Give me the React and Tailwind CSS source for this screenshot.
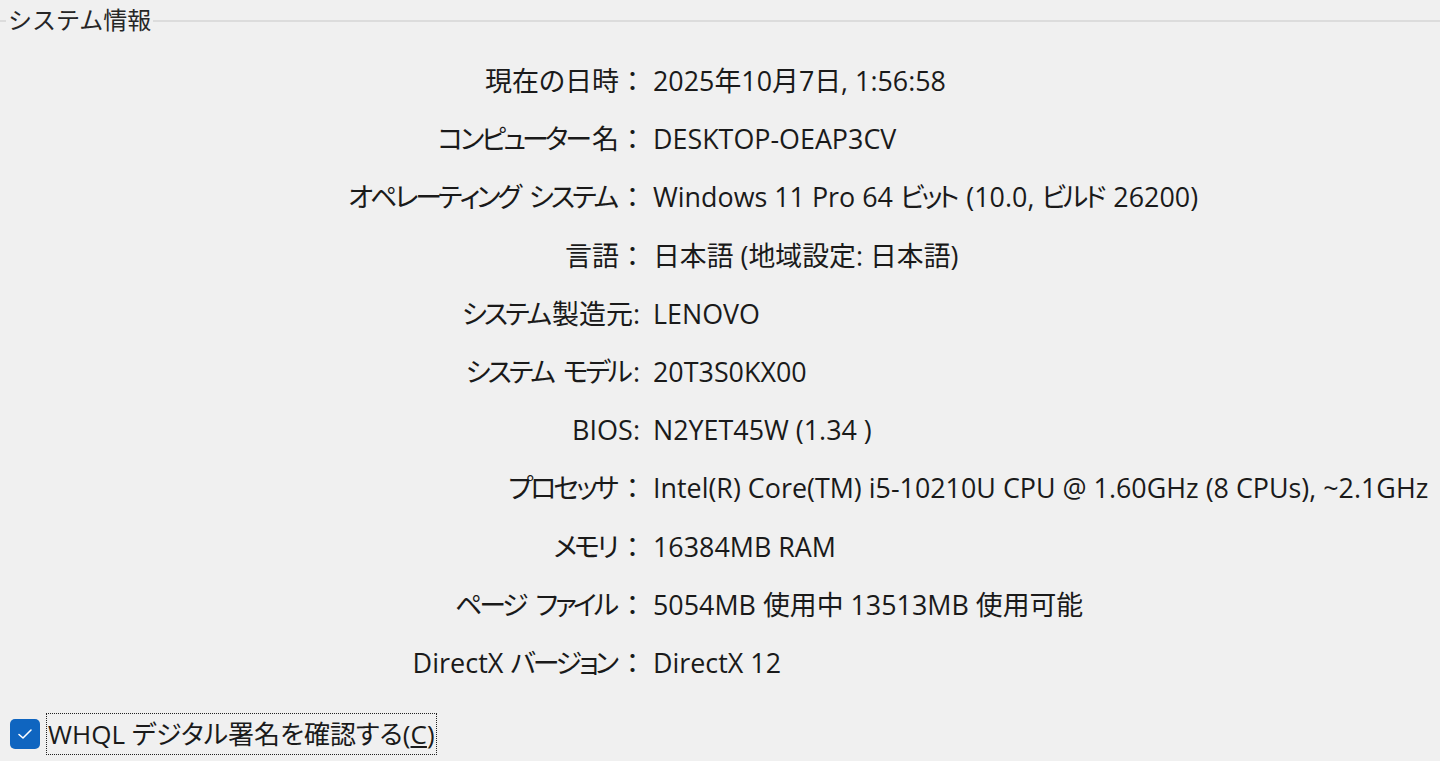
import React from 'react';

const rows = [
  ['現在の日時', '：', '2025年10月7日, 1:56:58'],
  ['コンピューター名', '：', 'DESKTOP-OEAP3CV'],
  ['オペレーティング システム', '：', 'Windows 11 Pro 64 ビット (10.0, ビルド 26200)'],
  ['言語', '：', '日本語 (地域設定: 日本語)'],
  ['システム製造元', ':', 'LENOVO'],
  ['システム モデル', ':', '20T3S0KX00'],
  ['BIOS', ':', 'N2YET45W (1.34 )'],
  ['プロセッサ', '：', 'Intel(R) Core(TM) i5-10210U CPU @ 1.60GHz (8 CPUs), ~2.1GHz'],
  ['メモリ', '：', '16384MB RAM'],
  ['ページ ファイル', '：', '5054MB 使用中 13513MB 使用可能'],
  ['DirectX バージョン', '：', 'DirectX 12'],
];

const font = { fontFamily: '"Open Sans", "Noto Sans CJK JP", sans-serif' };

const isKana = (ch) => /[\u30a0-\u30ff]/.test(ch || '');

// katakana in the reference font is narrower than Noto's, so squeeze it a bit
const Kana = ({ text }) => {
  const chars = Array.from(text);
  return chars.map((ch, i) => {
    if (isKana(ch) && isKana(chars[i + 1])) {
      const cls = /[ーャュョッィァゥェォ]/.test(ch) ? 'tracking-[-4px]' : 'tracking-[-3px]';
      return <span key={i} className={cls}>{ch}</span>;
    }
    return <React.Fragment key={i}>{ch}</React.Fragment>;
  });
};

const App = () => {
  return (
    <div
      className="w-[1440px] h-[761px] bg-[#f0f0f0] text-[#1a1a1a] overflow-hidden relative"
      style={font}
    >
      <div className="flex items-center h-[42px]">
        <div className="w-[6px] h-[2px] bg-[#dcdcdc]" />
        <span className="px-[2px] text-[24px] leading-none text-[#262626] -mt-[2px]">システム情報</span>
        <div className="flex-1 h-[2px] bg-[#dcdcdc]" />
      </div>

      <div className="grid grid-cols-[646px_1fr] gap-x-[7px] mt-[10px] text-[27px] leading-[58.2px]">
        {rows.map(([label, sep, value]) => (
          <React.Fragment key={label}>
            <div className={'text-right whitespace-nowrap ' + (sep === ':' ? 'pr-[6px]' : '')}>
              <span className="[font-feature-settings:'palt']"><Kana text={label} /></span>
              <span>{sep}</span>
            </div>
            <div className="whitespace-nowrap text-[26.85px] [font-feature-settings:'palt']"><Kana text={value} /></div>
          </React.Fragment>
        ))}
      </div>

      <div className="flex items-center mt-[21px] ml-[10px]">
        <div className="w-[30px] h-[30px] rounded-[5px] bg-[#0f65c0] flex items-center justify-center">
          <svg width="16" height="12" viewBox="0 0 16 12" fill="none">
            <path d="M2 6.5 L6 10 L14 2" stroke="white" strokeWidth="1.6" strokeLinecap="round" strokeLinejoin="round" />
          </svg>
        </div>
        <div className="ml-[6px] border border-dotted border-[#222] px-[1px] h-[42px] flex items-center">
          <span className="text-[26px] leading-none [font-feature-settings:'palt']">
            WHQL デジタル署名を確認する(<span className="underline">C</span>)
          </span>
        </div>
      </div>
    </div>
  );
};

export default App;
